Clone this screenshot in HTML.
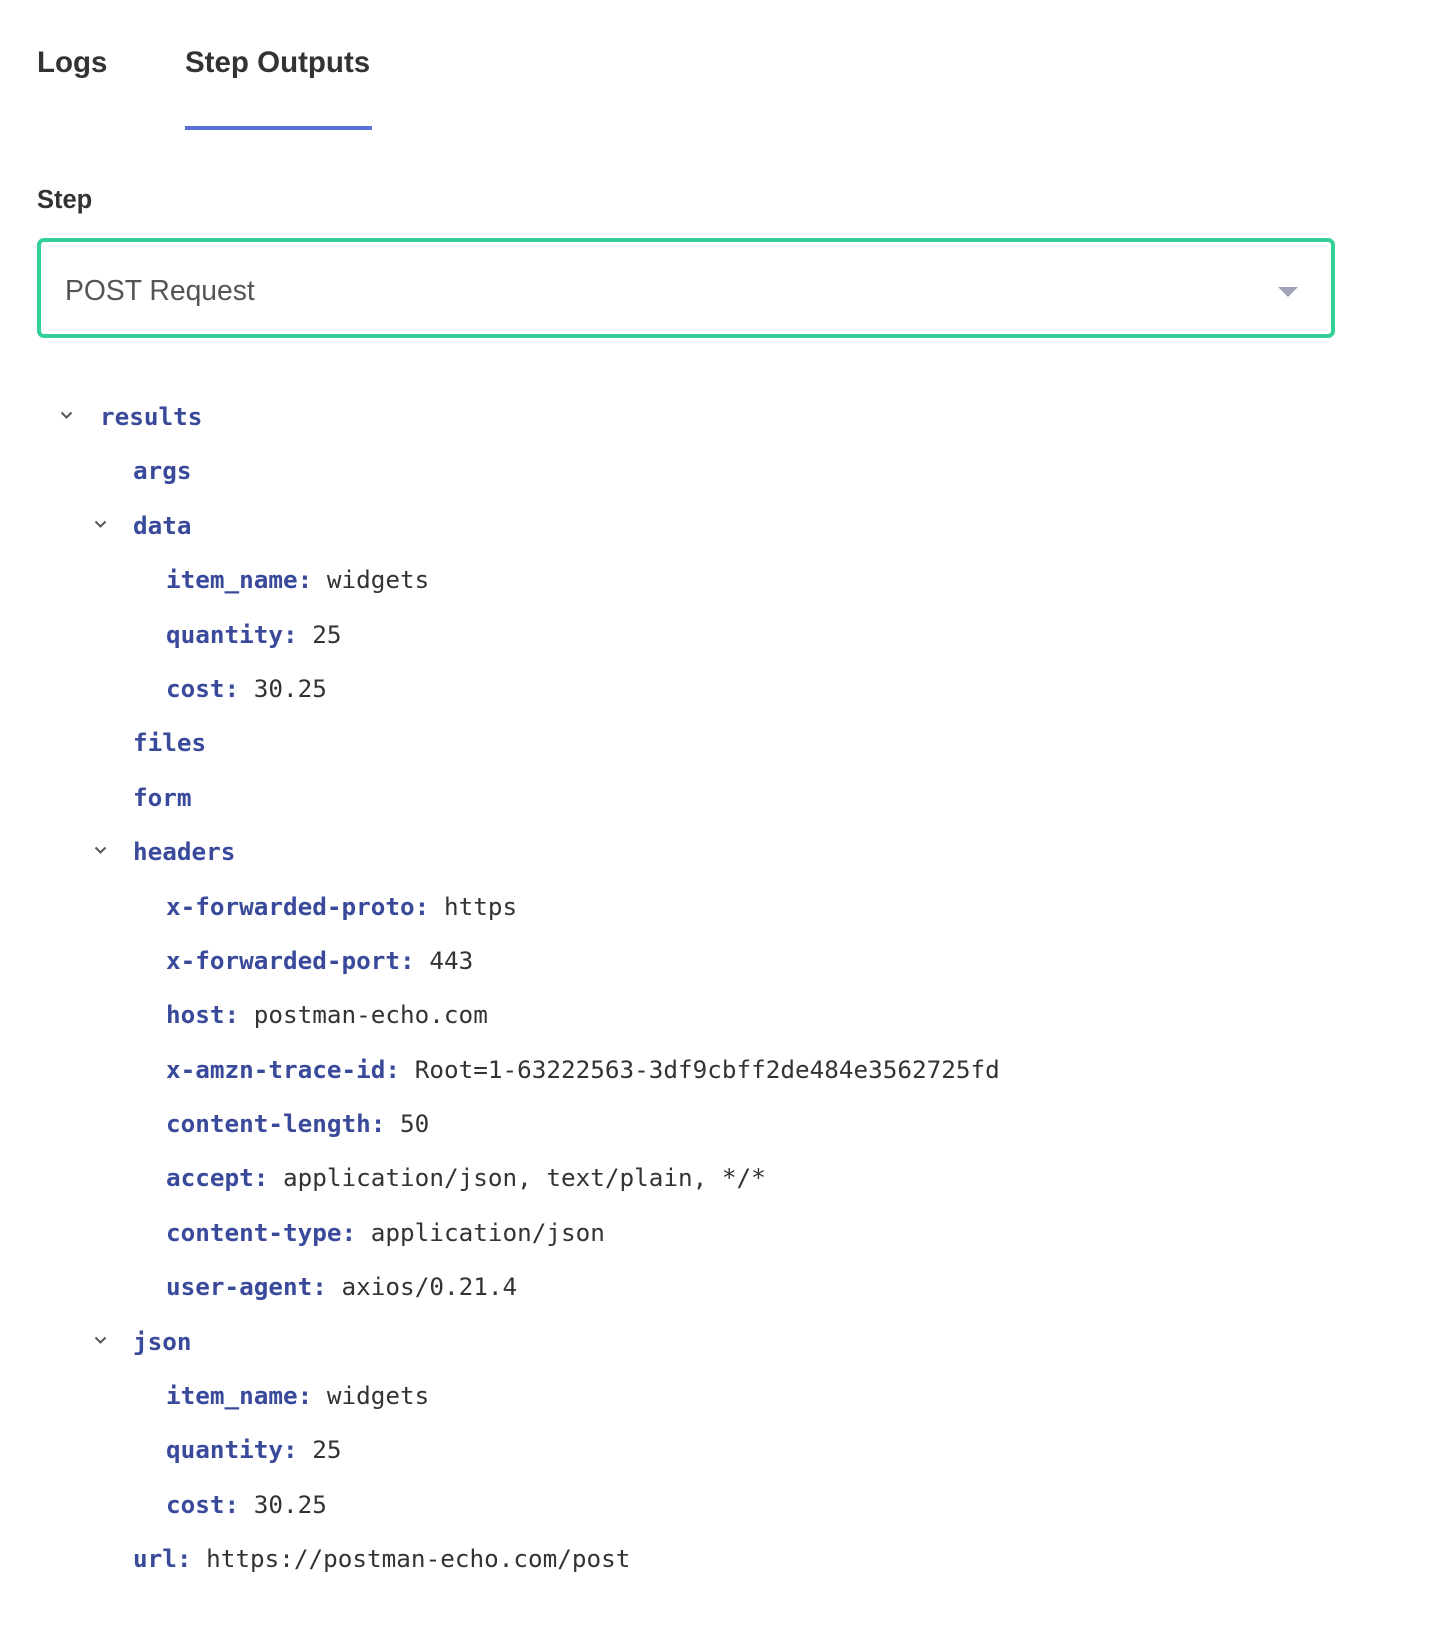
<!DOCTYPE html>
<html><head><meta charset="utf-8"><style>
html,body{margin:0;padding:0;background:#fff;}
body{width:1434px;height:1640px;position:relative;overflow:hidden;font-family:"Liberation Sans",sans-serif;}
.tab{position:absolute;top:46px;font-size:29.5px;font-weight:bold;color:#333;}
.ul{position:absolute;left:185px;top:126px;width:187px;height:4px;background:#5b72d8;}
.lbl{position:absolute;left:37px;top:186px;font-size:25.5px;font-weight:bold;color:#333;}
.box{position:absolute;left:37px;top:238px;width:1290px;height:92px;border:4px solid #34d196;border-radius:7px;}
.box span{position:absolute;left:24px;top:32px;font-size:28.3px;color:#555;}
.arrow{position:absolute;left:1237px;top:45px;width:0;height:0;border-left:10px solid transparent;border-right:10px solid transparent;border-top:10px solid #9ea2ba;}
.tree{position:absolute;left:0;top:390px;font-family:"DejaVu Sans Mono","Liberation Mono",monospace;font-size:24.3px;}
.r{height:54.4px;line-height:54.4px;position:relative;white-space:pre;color:#333;}
.k{color:#3a4a9b;font-weight:bold;}
.l0{padding-left:100px}.l1{padding-left:133px}.l2{padding-left:166px}
.c{position:absolute;top:21px;width:13px;height:8px;}
</style></head><body>
<div class="tab" style="left:37px">Logs</div>
<div class="tab" style="left:185px">Step Outputs</div>
<div class="ul"></div>
<div class="lbl">Step</div>
<div class="box"><span>POST Request</span><div class="arrow"></div></div>
<div class="tree">
<div class="r l0"><svg class="c" style="left:60px" viewBox="0 0 12 8"><path d="M1 1.5L6 6.5L11 1.5" fill="none" stroke="#555" stroke-width="2"/></svg><span class="k">results</span></div>
<div class="r l1"><span class="k">args</span></div>
<div class="r l1"><svg class="c" style="left:94px" viewBox="0 0 12 8"><path d="M1 1.5L6 6.5L11 1.5" fill="none" stroke="#555" stroke-width="2"/></svg><span class="k">data</span></div>
<div class="r l2"><span class="k">item_name:</span> widgets</div>
<div class="r l2"><span class="k">quantity:</span> 25</div>
<div class="r l2"><span class="k">cost:</span> 30.25</div>
<div class="r l1"><span class="k">files</span></div>
<div class="r l1"><span class="k">form</span></div>
<div class="r l1"><svg class="c" style="left:94px" viewBox="0 0 12 8"><path d="M1 1.5L6 6.5L11 1.5" fill="none" stroke="#555" stroke-width="2"/></svg><span class="k">headers</span></div>
<div class="r l2"><span class="k">x-forwarded-proto:</span> https</div>
<div class="r l2"><span class="k">x-forwarded-port:</span> 443</div>
<div class="r l2"><span class="k">host:</span> postman-echo.com</div>
<div class="r l2"><span class="k">x-amzn-trace-id:</span> Root=1-63222563-3df9cbff2de484e3562725fd</div>
<div class="r l2"><span class="k">content-length:</span> 50</div>
<div class="r l2"><span class="k">accept:</span> application/json, text/plain, */*</div>
<div class="r l2"><span class="k">content-type:</span> application/json</div>
<div class="r l2"><span class="k">user-agent:</span> axios/0.21.4</div>
<div class="r l1"><svg class="c" style="left:94px" viewBox="0 0 12 8"><path d="M1 1.5L6 6.5L11 1.5" fill="none" stroke="#555" stroke-width="2"/></svg><span class="k">json</span></div>
<div class="r l2"><span class="k">item_name:</span> widgets</div>
<div class="r l2"><span class="k">quantity:</span> 25</div>
<div class="r l2"><span class="k">cost:</span> 30.25</div>
<div class="r l1"><span class="k">url:</span> https://postman-echo.com/post</div>
</div>
</body></html>
